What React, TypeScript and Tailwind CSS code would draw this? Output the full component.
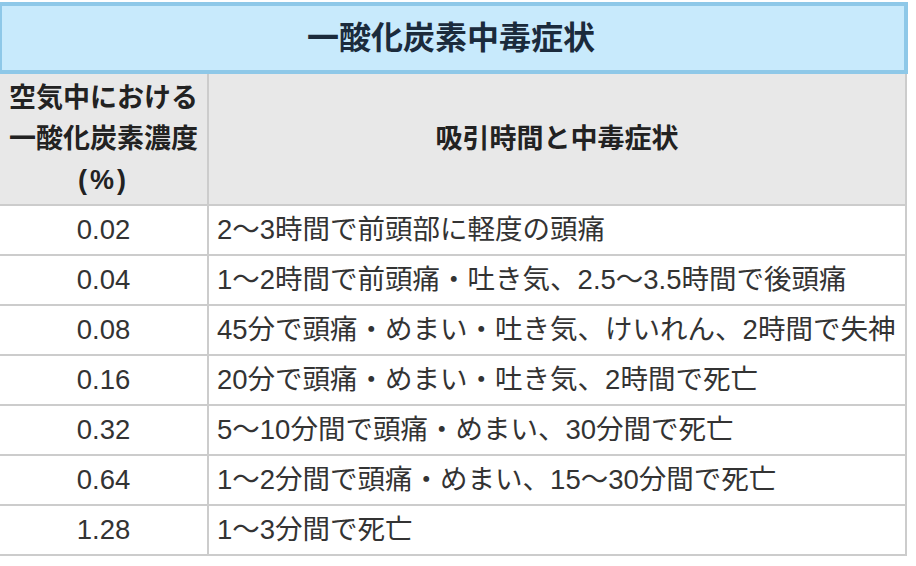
const rows = [
  { level: "0.02", symptom: "2〜3時間で前頭部に軽度の頭痛" },
  { level: "0.04", symptom: "1〜2時間で前頭痛・吐き気、2.5〜3.5時間で後頭痛" },
  { level: "0.08", symptom: "45分で頭痛・めまい・吐き気、けいれん、2時間で失神" },
  { level: "0.16", symptom: "20分で頭痛・めまい・吐き気、2時間で死亡" },
  { level: "0.32", symptom: "5〜10分間で頭痛・めまい、30分間で死亡" },
  { level: "0.64", symptom: "1〜2分間で頭痛・めまい、15〜30分間で死亡" },
  { level: "1.28", symptom: "1〜3分間で死亡" },
]

const font = { fontFamily: '"Liberation Sans", "Noto Sans CJK JP", sans-serif' }

export default function App() {
  return (
    <div className="w-[916px] h-[566px] bg-white overflow-hidden" style={font}>
      <div className="-ml-[2px] pt-[2px]">
        <div className="w-[910px] h-[72px] border-4 border-[#8ec8e8] bg-[#c8eafc] flex items-center justify-center">
          <h2 className="text-[32px] font-bold text-[#1b2b3c] leading-none pr-[4px]">一酸化炭素中毒症状</h2>
        </div>
        <div className="w-[909px] border-x-2 border-[#cccccc]">
          <div className="flex h-[132px] border-b-2 border-[#cccccc] bg-[#e8e8e8]">
            <div className="w-[209px] border-r-2 border-[#cccccc] flex items-center justify-center">
              <p className="text-[27px] font-bold text-[#222] leading-[41px] text-center">
                空気中における
                <br />
                一酸化炭素濃度
                <br />
                <span className="tracking-[3px]">(%)</span>
              </p>
            </div>
            <div className="flex-1 flex items-center justify-center">
              <p className="text-[27px] font-bold text-[#222]">吸引時間と中毒症状</p>
            </div>
          </div>
          {rows.map((row) => (
            <div key={row.level} className="flex h-[50px] border-b-2 border-[#cccccc]">
              <div className="w-[209px] border-r-2 border-[#cccccc] flex items-center justify-center text-[27.5px] text-[#333]">
                {row.level}
              </div>
              <div className="flex-1 flex items-center pl-[8px] text-[27.5px] text-[#333] whitespace-nowrap">
                {row.symptom}
              </div>
            </div>
          ))}
        </div>
      </div>
    </div>
  )
}
